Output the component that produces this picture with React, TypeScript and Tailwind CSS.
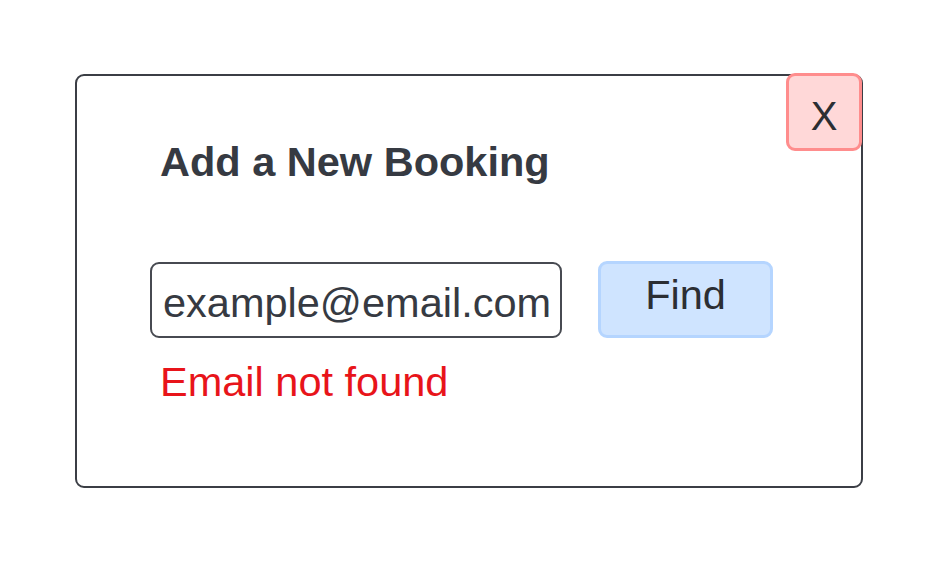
import React from 'react';

const App: React.FC = () => {
  return (
    <div className="flex h-screen w-full items-center justify-center bg-white font-['Liberation_Sans',Arial,sans-serif]">
      <div className="relative -mt-px h-[414px] w-[788px] rounded-[9px] border-2 border-[#3b3e45] bg-white pl-[73px] pt-[62px]">
        <button className="absolute -top-[3px] -right-px flex h-[78px] w-[76px] items-center justify-center rounded-[9px] border-[3px] border-[#ff8d8d] bg-[#ffd8d8] pt-[7px] text-[40px] leading-none text-[#2b2e33]">
          X
        </button>

        <h2 className="pl-[10px] text-[41.5px] font-bold leading-[48px] text-[#363a42]">Add a New Booking</h2>

        <div className="mt-[76px] flex items-start gap-[36px]">
          <input
            readOnly
            defaultValue="example@email.com"
            className="h-[76px] w-[412px] rounded-[9px] border-2 border-[#474a51] pl-[11px] pt-[6px] text-[41.5px] text-[#363a42] outline-none"
          />
          <button className="-mt-px h-[77px] w-[175px] rounded-[9px] border-[3px] border-[#b5d5ff] bg-[#cfe4ff] pb-[9px] text-[41.5px] text-[#2b2e33]">
            Find
          </button>
        </div>

        <p className="mt-[20px] pl-[10px] text-[41.5px] leading-[48px] text-[#e8141a]">Email not found</p>
      </div>
    </div>
  );
};

export default App;
